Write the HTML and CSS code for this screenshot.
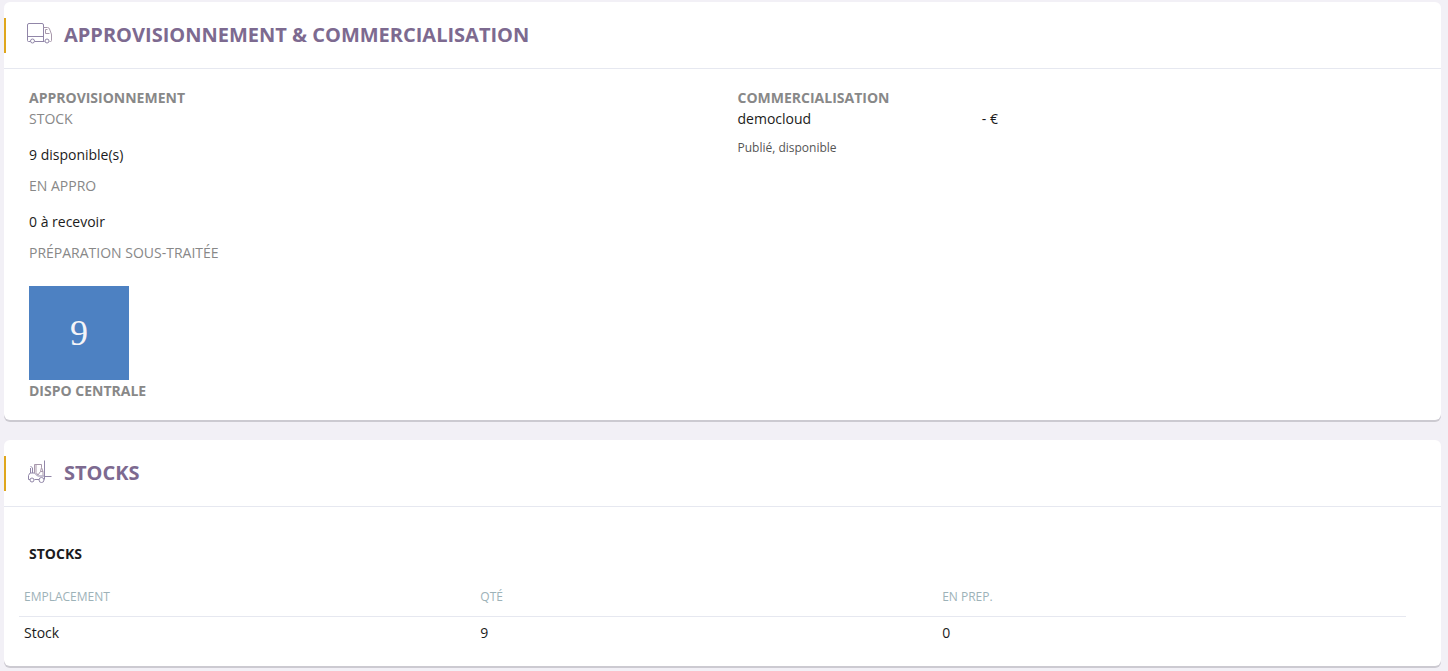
FILE: index.html
```html
<!DOCTYPE html>
<html lang="fr">
<head>
<meta charset="utf-8">
<title>Approvisionnement &amp; commercialisation</title>
<link rel="stylesheet" href="styles.css">
</head>
<body>
<main class="page">
  <section class="card">
    <header class="card-header">
      <svg class="card-icon" viewBox="0 0 26 24" aria-hidden="true">
        <path d="M4 19.500H2.500q-1 0-1-1V3q0-1.500 1.500-1.500h13q1.500 0 1.500 1.500v16.500M9 19.500h9.500M1.500 14.500h16"/>
        <path class="warm" d="M17.500 5.500h4q1.500 0 2 1.500l1.500 4q.5 1 .5 2v5.500q0 1-1 1h-1M23.500 11.500h-4v-4h2"/>
        <circle cx="6.500" cy="19" r="2"/>
        <circle cx="21" cy="19" r="2"/>
      </svg>
      <h2 class="card-title">APPROVISIONNEMENT &amp; COMMERCIALISATION</h2>
    </header>
    <div class="columns">
      <div class="column">
        <h3 class="label strong">APPROVISIONNEMENT</h3>
        <h4 class="label">STOCK</h4>
        <p class="value">9 disponible(s)</p>
        <h4 class="label">EN APPRO</h4>
        <p class="value">0 à recevoir</p>
        <h4 class="label">PRÉPARATION SOUS-TRAITÉE</h4>
        <div class="tile">9</div>
        <p class="label strong">DISPO CENTRALE</p>
      </div>
      <div class="column">
        <h3 class="label strong">COMMERCIALISATION</h3>
        <div class="channel">
          <span>democloud</span>
          <span>- €</span>
        </div>
        <p class="status">Publié, disponible</p>
      </div>
    </div>
  </section>

  <section class="card">
    <header class="card-header">
      <svg class="card-icon" viewBox="0 0 26 24" aria-hidden="true">
        <path d="M18.500.5v19M18.500 16.500h7M4 19.500H2.500v-4l1.500-2.500h4.500l3 3h7M8.500 19.500H13M4.500 13V8M6.500 13V8l-2-2"/>
        <path class="warm" d="M8.500 13V4.500h7v3l1.500 4M10 4.500v8M10 12.500l2 2.500 2.500-3.500h2.500v4M15.500 7.500l-1 4"/>
        <circle cx="6" cy="20" r="2"/>
        <circle cx="15.500" cy="20" r="2.500"/>
      </svg>
      <h2 class="card-title">STOCKS</h2>
    </header>
    <div class="stock-body">
      <h3 class="table-title" id="stock-title">STOCKS</h3>
      <table class="stock-table" aria-labelledby="stock-title">
        <colgroup>
          <col class="col-place">
          <col class="col-quantity">
          <col>
        </colgroup>
        <thead>
          <tr><th scope="col">EMPLACEMENT</th><th scope="col">QTÉ</th><th scope="col">EN PREP.</th></tr>
        </thead>
        <tbody>
          <tr><td>Stock</td><td>9</td><td>0</td></tr>
        </tbody>
      </table>
    </div>
  </section>
</main>
</body>
</html>
```
FILE: styles.css
```css
* {
  box-sizing: border-box;
}

body {
  margin: 0;
  background: #f2f0f6;
  color: #1b1b20;
  font: 14px/21px "Open Sans", sans-serif;
}

h2, h3, h4, p {
  margin: 0;
}

.page {
  display: flex;
  flex-direction: column;
  gap: 20px;
  padding: 2px 7px 3px 4px;
}

.card {
  background: #fff;
  border-radius: 6px;
  box-shadow: 0 2px 0 #cccad1;
}

.card-header {
  display: flex;
  align-items: flex-start;
  padding: 16px 0 15px;
  border-bottom: 1px solid #e6e8f0;
}

.card-header::before {
  content: "";
  width: 2px;
  height: 35px;
  background: #dfa61c;
}

.card-icon {
  width: 26px;
  height: 24px;
  margin: 4px 12px 0 20px;
  fill: none;
  stroke: #9186a8;
  stroke-width: 1;
}

.card-icon circle {
  fill: #fff;
}

.card-icon .warm {
  stroke: #a898ac;
}

.card-title {
  color: #7d6a90;
  font-size: 20px;
  line-height: 33px;
  font-weight: 700;
}

.columns {
  display: grid;
  grid-template-columns: 1fr 1fr;
  padding: 18px 10px 19px;
}

.column {
  padding: 0 15px;
}

.label {
  color: #888;
  font-size: 14px;
  font-weight: 400;
}

.strong {
  font-weight: 700;
}

.value {
  padding: 15px 0 10px;
}

.tile {
  width: 100px;
  margin-top: 23px;
  background: #4d81c2;
  color: #f4f4f8;
  font: 36px/94px "Liberation Serif", serif;
  text-align: center;
}

.channel {
  display: grid;
  grid-template-columns: 36% 1fr;
}

.status {
  margin-top: 8px;
  color: #555;
  font-size: 12px;
}

.stock-body {
  padding: 36px 35px 20px 15px;
}

.table-title {
  padding-left: 10px;
  font-size: 14px;
  font-weight: 700;
}

.stock-table {
  width: 100%;
  margin-top: 16px;
  border-collapse: collapse;
  table-layout: fixed;
}

.col-place {
  width: 32.9%;
}

.col-quantity {
  width: 33.3%;
}

.stock-table th {
  padding: 6px 5px 9px;
  border-bottom: 1px solid #e6e8f0;
  color: #9db2b8;
  font-size: 12px;
  font-weight: 400;
  text-align: left;
}

.stock-table td {
  padding: 5px 5px 3px;
}
```
